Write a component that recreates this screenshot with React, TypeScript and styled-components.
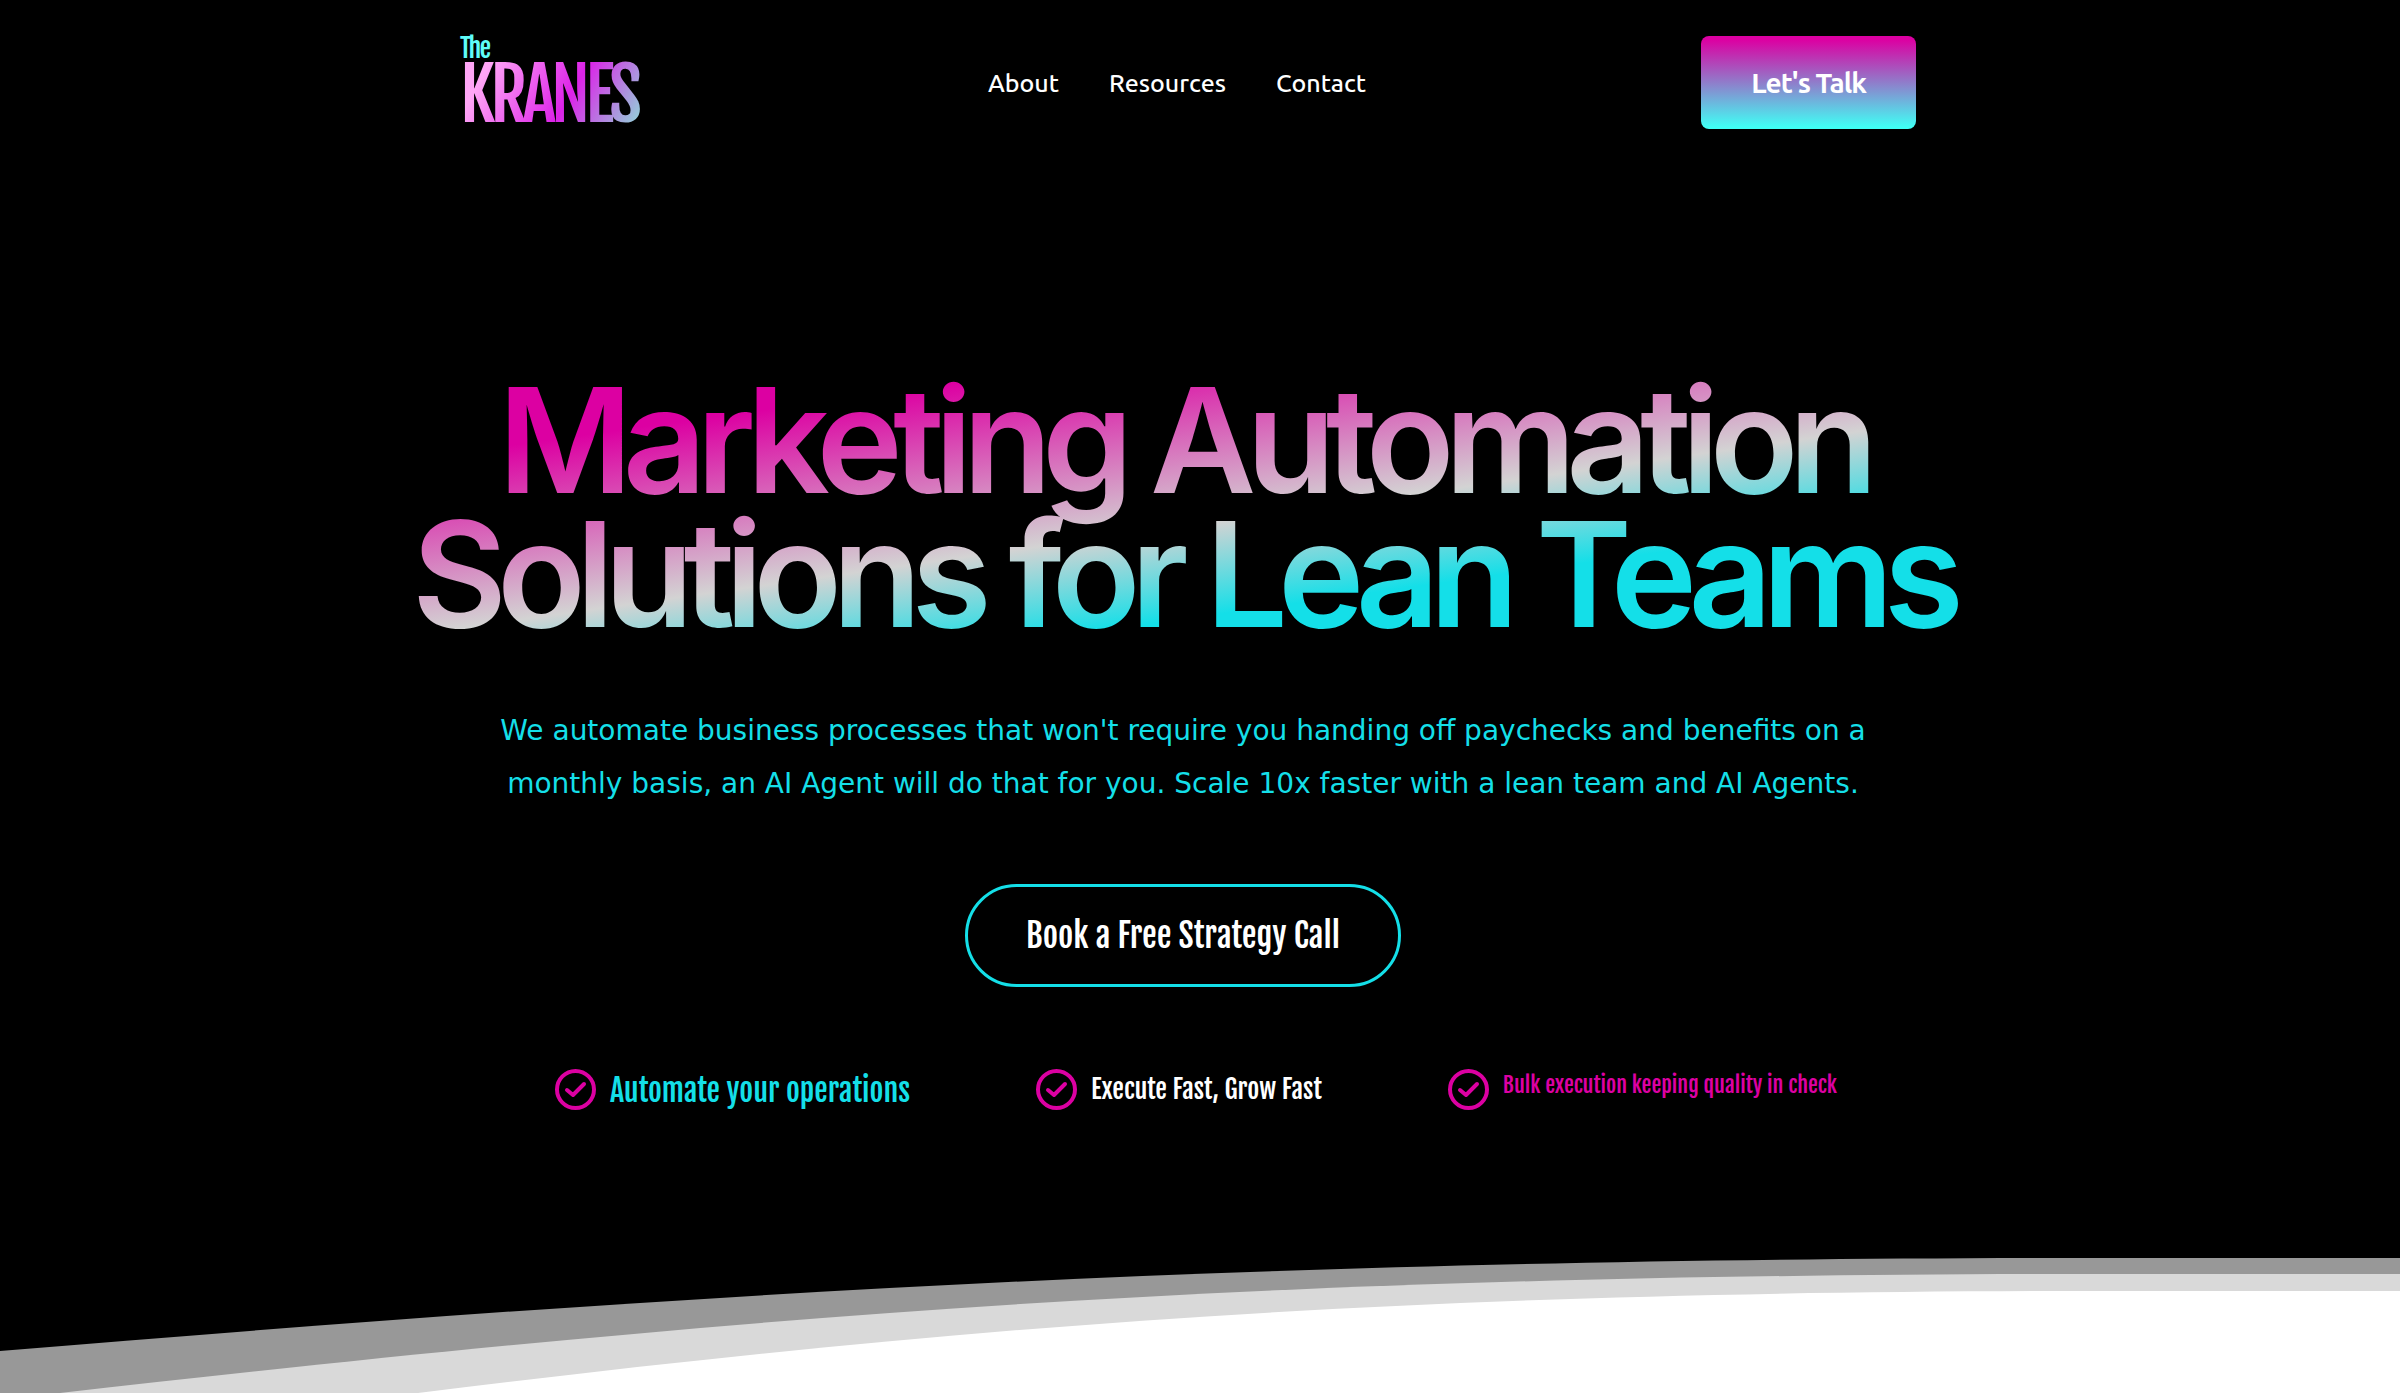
import React from 'react';
import styled, { createGlobalStyle } from 'styled-components';

const magenta = '#dc00a2';
const cyan = '#14dfe8';
const condensed = '"Fjalla One", "Roboto Condensed", "DejaVu Sans Condensed", sans-serif';
const humanist = 'Ubuntu, "Noto Sans", sans-serif';

const GlobalStyle = createGlobalStyle`
  *, *::before, *::after { box-sizing: border-box; }
  body { margin: 0; background: #fff; }
`;

const Page = styled.div`
  display: flex;
  flex-direction: column;
  min-height: 100vh;
  background: #000;
  color: #fff;
  overflow: hidden;
`;

const Content = styled.div`
  padding-right: 34px;
`;

const Header = styled.header`
  display: flex;
  align-items: center;
  justify-content: space-between;
  width: 100%;
  max-width: 1466px;
  margin: 0 auto;
  padding-top: 36px;
`;

const Logo = styled.a`
  display: flex;
  flex-direction: column;
  width: 203px;
  padding-left: 10px;
  font-family: ${condensed};
  text-decoration: none;
`;

const LogoSmall = styled.span`
  font-size: 26px;
  line-height: 25px;
  letter-spacing: -2px;
  color: #5ffcf8;
`;

const LogoBig = styled.span`
  align-self: flex-start;
  padding-right: 8px;
  font-size: 72px;
  line-height: 68px;
  letter-spacing: -5px;
  color: transparent;
  background: linear-gradient(120deg, #ffa6f6 14%, #dc22e8 58%, #8edcd8 98%);
  background-clip: text;
  -webkit-background-clip: text;
`;

const Nav = styled.nav`
  display: flex;
  gap: 50px;
`;

const NavLink = styled.a`
  font: 500 25px/32px ${humanist};
  color: #fff;
  text-decoration: none;
`;

const TalkButton = styled.button`
  width: 215px;
  height: 93px;
  border: 0;
  border-radius: 8px;
  background: linear-gradient(180deg, ${magenta} 4%, #40fff5 98%);
  font: 700 28px/32px ${humanist};
  letter-spacing: -1px;
  color: #fff;
  cursor: pointer;
`;

const Hero = styled.main`
  display: flex;
  flex-direction: column;
  align-items: center;
  padding-top: 244px;
  text-align: center;
`;

const Title = styled.h1`
  width: 100%;
  max-width: 1566px;
  margin: 0;
  font: 600 146px/134px Inter, sans-serif;
  letter-spacing: -10px;
  color: transparent;
  background: linear-gradient(172deg, ${magenta} 18%, #d3d3d3 54%, ${cyan} 73%);
  background-clip: text;
  -webkit-background-clip: text;
`;

const Lead = styled.p`
  max-width: 1400px;
  margin: 63px 0 0;
  font: 400 28px/53px Verdana, "DejaVu Sans", sans-serif;
  color: ${cyan};
`;

const CallButton = styled.button`
  margin-top: 74px;
  padding: 0 58px;
  height: 103px;
  border: 3px solid ${cyan};
  border-radius: 52px;
  background: transparent;
  font: 400 33px/50px ${condensed};
  color: #fff;
  cursor: pointer;
`;

const Benefits = styled.ul`
  display: flex;
  flex-wrap: wrap;
  justify-content: center;
  gap: 24px 126px;
  margin: 81px 0 0;
  padding: 0 0 0 26px;
  list-style: none;
`;

const Benefit = styled.li`
  display: flex;
  align-items: flex-start;
  gap: 14px;
`;

const CheckIcon = styled.svg`
  flex: none;
  width: 41px;
  height: 41px;
  margin-top: 1px;
`;

const BenefitText = styled.span<{ $size: number; $line: number; $color: string }>`
  font-family: ${condensed};
  font-size: ${(p) => p.$size}px;
  line-height: ${(p) => p.$line}px;
  color: ${(p) => p.$color};
`;

const Wave = styled.svg`
  display: block;
  width: 100%;
  height: 136px;
  margin-top: auto;
`;

const links = ['About', 'Resources', 'Contact'];

const benefits = [
  { text: 'Automate your operations', size: 30, line: 46, color: cyan },
  { text: 'Execute Fast, Grow Fast', size: 26, line: 42, color: '#fff' },
  { text: 'Bulk execution keeping quality in check', size: 22, line: 34, color: magenta },
];

export default function App() {
  return (
    <Page>
      <GlobalStyle />
      <Content>
        <Header>
          <Logo href="#" aria-label="The Kranes">
            <LogoSmall>The</LogoSmall>
            <LogoBig>KRANES</LogoBig>
          </Logo>
          <Nav>
            {links.map((label) => (
              <NavLink key={label} href="#">{label}</NavLink>
            ))}
          </Nav>
          <TalkButton type="button">Let's Talk</TalkButton>
        </Header>
        <Hero>
          <Title>Marketing Automation Solutions for Lean Teams</Title>
          <Lead>
            We automate business processes that won't require you handing off paychecks and
            benefits on a monthly basis, an AI Agent will do that for you. Scale 10x faster with a
            lean team and AI Agents.
          </Lead>
          <CallButton type="button">Book a Free Strategy Call</CallButton>
          <Benefits>
            {benefits.map((b) => (
              <Benefit key={b.text}>
                <CheckIcon viewBox="0 0 41 41" fill="none" stroke={magenta} aria-hidden="true">
                  <circle cx="20.5" cy="20.5" r="18.5" strokeWidth="4" />
                  <path d="M12 21l6 5 11-11" strokeWidth="4" strokeLinecap="round" strokeLinejoin="round" />
                </CheckIcon>
                <BenefitText $size={b.size} $line={b.line} $color={b.color}>{b.text}</BenefitText>
              </Benefit>
            ))}
          </Benefits>
        </Hero>
      </Content>
      <Wave viewBox="0 0 2400 136" preserveAspectRatio="none" aria-hidden="true">
        <path fill="#989898" d="M0 94C700 36 1250 1 2100 1H2400V136H0Z" />
        <path fill="#d9d9d9" d="M60 136C760 57 1250 17 2100 17H2400V136Z" />
        <path fill="#fff" d="M418 136C960 69 1400 34 2100 34H2400V136Z" />
      </Wave>
    </Page>
  );
}
